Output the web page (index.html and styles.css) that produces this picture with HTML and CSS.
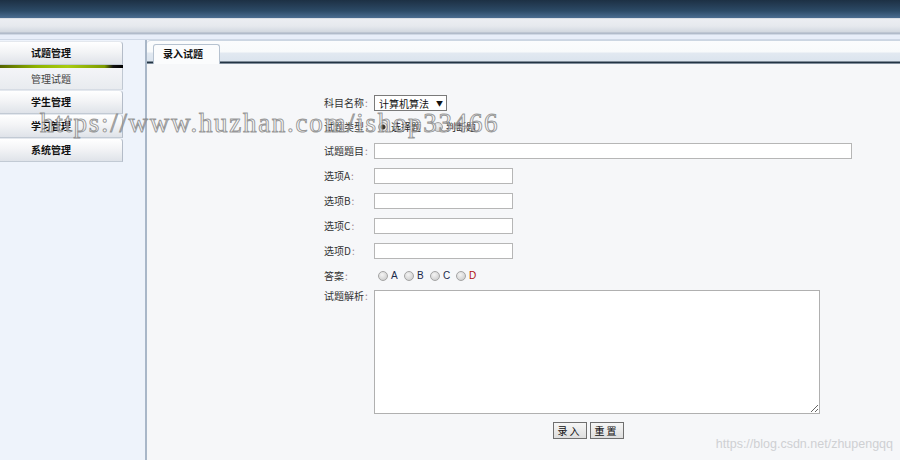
FILE: index.html
```html
<!DOCTYPE html>
<html lang="zh-CN">
<head>
    <meta charset="UTF-8">
    <title>录入试题</title>
    <link rel="stylesheet" href="styles.css">
</head>
<body>
    <div class="topbar"></div>
    <div class="subbar"></div>

    <div class="layout">
        <aside class="sidebar">
            <div class="menu-item">试题管理</div>
            <div class="menu-bar"></div>
            <div class="menu-sub">管理试题</div>
            <div class="menu-item">学生管理</div>
            <div class="menu-item">学习管理</div>
            <div class="menu-item">系统管理</div>
        </aside>

        <main class="main">
            <div class="tabbar">
                <div class="tab">录入试题</div>
            </div>

            <form class="form">
                <div class="row r1">
                    <span class="label">科目名称<i>:</i></span>
                    <span class="select-wrap">
                        <select class="select">
                            <option>计算机算法</option>
                        </select>
                        <span class="arrow">▼</span>
                    </span>
                </div>
                <div class="row r2">
                    <span class="label">试题类型<i>:</i></span>
                    <label class="opt"><input type="radio" name="type" checked>选择题</label>
                    <label class="opt"><input type="radio" name="type">判断题</label>
                </div>
                <div class="row">
                    <span class="label">试题题目<i>:</i></span>
                    <input type="text" class="text wide">
                </div>
                <div class="row">
                    <span class="label">选项A<i>:</i></span>
                    <input type="text" class="text">
                </div>
                <div class="row">
                    <span class="label">选项B<i>:</i></span>
                    <input type="text" class="text">
                </div>
                <div class="row">
                    <span class="label">选项C<i>:</i></span>
                    <input type="text" class="text">
                </div>
                <div class="row">
                    <span class="label">选项D<i>:</i></span>
                    <input type="text" class="text">
                </div>
                <div class="row">
                    <span class="label">答案<i>:</i></span>
                    <label class="ans"><input type="radio" name="ans">A</label>
                    <label class="ans"><input type="radio" name="ans">B</label>
                    <label class="ans"><input type="radio" name="ans">C</label>
                    <label class="ans red"><input type="radio" name="ans">D</label>
                </div>
                <div class="row area-row">
                    <span class="label">试题解析<i>:</i></span>
                    <textarea class="area"></textarea>
                </div>
                <div class="buttons">
                    <button type="button" class="btn">录入</button>
                    <button type="button" class="btn">重置</button>
                </div>
            </form>

            <div class="mark-csdn">https://blog.csdn.net/zhupengqq</div>
        </main>
    </div>

    <div class="mark-shop">https://www.huzhan.com/ishop33466</div>
</body>
</html>
```

FILE: styles.css
```css
* {
    box-sizing: border-box;
}

body {
    margin: 0;
    font-family: "Noto Sans CJK SC", sans-serif;
    font-size: 10px;
    color: #222;
    background-color: #f6f7f9;
    position: relative;
    height: 460px;
    overflow: hidden;
}

/* Header bars */
.topbar {
    height: 18px;
    background: linear-gradient(#1d3044, #2c4a66 60%, #4b6d90);
}

.subbar {
    height: 22px;
    background: linear-gradient(
        #c9ced6 0, #eceef2 1px, #e6e9ee 8px, #d2d8e0 14px,
        #aab4c4 15px, #b8c2d0 16px, #e8eef9 17px, #e8eef9 21px, #cfd8e6 21px);
}

.layout {
    display: flex;
    height: 420px;
}

/* Sidebar menu */
.sidebar {
    width: 145px;
    flex: none;
    background-color: #eef3fb;
    padding-top: 1px;
}

.menu-item {
    width: 123px;
    height: 24px;
    line-height: 22px;
    padding-left: 31px;
    font-weight: bold;
    color: #111;
    background: linear-gradient(#ffffff, #f3f4f6 45%, #dfe3e9);
    border-right: 1px solid #b4bcc8;
    border-bottom: 1px solid #c2cad4;
    border-top: 1px solid #e4e8ee;
    border-radius: 0 4px 0 0;
}

.menu-bar {
    width: 123px;
    height: 3px;
    background: linear-gradient(90deg, #556400, #8fb400 30%, #a8cc10 55%, #7c9a00 85%, #111 92%, #000);
}

.menu-sub {
    width: 123px;
    height: 22px;
    line-height: 21px;
    padding-left: 31px;
    color: #444;
    background: linear-gradient(#f4f5f8, #e8ebef);
    border-right: 1px solid #c0c8d2;
    border-bottom: 1px solid #d6dce4;
}

/* Main panel */
.main {
    flex: 1;
    border-left: 2px solid #a9b7c8;
    position: relative;
}

.tabbar {
    height: 24px;
    padding: 3px 0 0 6px;
    border-top: 1px solid #ccd6e2;
    border-radius: 4px 0 0 0;
    background: linear-gradient(#fbfcfd 0, #f8fafb 11px, #e2e9f1 12px, #dbe4ee 20px,
        #233444 21px, #233444 22px, #7f8c9a 22px);
}

.tab {
    width: 67px;
    height: 20px;
    line-height: 18px;
    padding-left: 9px;
    font-weight: bold;
    color: #111;
    background: #fbfcfd;
    border: 1px solid #b6c2d0;
    border-bottom: none;
    border-radius: 3px 3px 0 0;
}

/* Form */
.form {
    width: 528px;
    margin: 26px 0 0 177px;
}

.row {
    display: flex;
    align-items: center;
    height: 25px;
}

.r2 {
    height: 23px;
}

.label {
    width: 50px;
    flex: none;
    color: #333;
}

.label i {
    font-style: normal;
    color: #a08890;
    margin-left: 1px;
}

.select-wrap {
    position: relative;
}

.select {
    appearance: none;
    width: 73px;
    height: 16px;
    padding: 0 0 0 4px;
    border: 1px solid #7a7a7a;
    background: #fff;
    font-family: "Noto Sans CJK SC", sans-serif;
    font-size: 10px;
    color: #111;
    display: block;
}

.arrow {
    position: absolute;
    right: 4px;
    top: 1px;
    font-size: 7px;
    line-height: 14px;
    color: #111;
    pointer-events: none;
}

input[type="radio"] {
    appearance: none;
    width: 10px;
    height: 10px;
    margin: 0 3px 0 4px;
    border: 1px solid #a4a4a4;
    border-radius: 50%;
    background: radial-gradient(circle at 40% 35%, #f4f4f4, #c6c6c6);
}

input[type="radio"]:checked {
    background: radial-gradient(circle, #333 0 2px, #e6e6e6 3px, #c6c6c6);
}

.opt {
    display: flex;
    align-items: center;
    margin-right: 8px;
    color: #222;
}

.ans {
    display: flex;
    align-items: center;
    width: 26px;
    font-family: "Liberation Sans", Arial, sans-serif;
    font-size: 10px;
    color: #1b2a4a;
}

.ans.red {
    color: #b01010;
}

.text {
    width: 139px;
    height: 16px;
    border: 1px solid #b6b6b6;
    background: #fff;
    margin: 0;
}

.text.wide {
    width: 478px;
}

.area-row {
    height: auto;
    align-items: flex-start;
    margin-top: 2px;
}

.area-row .label {
    line-height: 12px;
}

.area {
    width: 446px;
    height: 124px;
    border: 1px solid #b0b0b0;
    background: #fff;
    margin: 0;
    resize: both;
}

.buttons {
    display: flex;
    justify-content: center;
    gap: 3px;
    margin-top: 8px;
}

.btn {
    width: 34px;
    height: 17px;
    padding: 0;
    border: 1px solid #6f6f6f;
    background: linear-gradient(#f6f6f6, #dedede);
    font-family: "Noto Sans CJK SC", sans-serif;
    font-size: 10px;
    line-height: 14px;
    letter-spacing: 2px;
    color: #111;
}

/* Watermarks */
.mark-csdn {
    position: absolute;
    right: 7px;
    bottom: 9px;
    font-family: "Liberation Sans", Arial, sans-serif;
    font-size: 12.5px;
    color: #cfd0d3;
}

.mark-shop {
    position: absolute;
    left: 40px;
    top: 108px;
    font-family: "Liberation Serif", "Times New Roman", serif;
    font-size: 27px;
    letter-spacing: 1.7px;
    color: rgba(255, 255, 255, 0.55);
    -webkit-text-stroke: 1px rgba(120, 120, 120, 0.75);
    pointer-events: none;
}
```
